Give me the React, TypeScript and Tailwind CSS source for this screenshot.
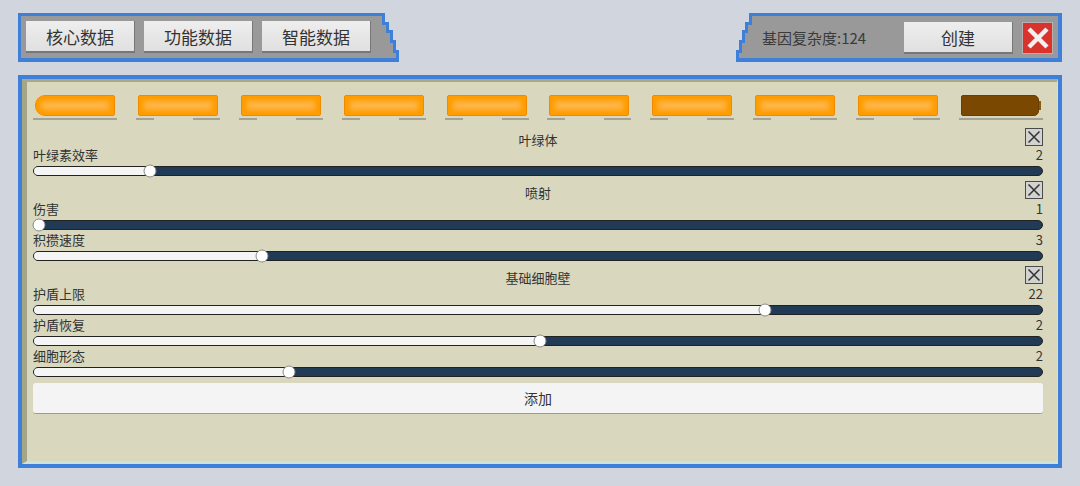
import React from "react";

const FONT = { fontFamily: '"Noto Sans CJK SC", "Noto Sans", sans-serif' };

type Item = { label: string; value: string; pct: number };
type Section = { title: string; items: Item[] };

const sections: Section[] = [
  { title: "叶绿体", items: [{ label: "叶绿素效率", value: "2", pct: 11.3 }] },
  {
    title: "喷射",
    items: [
      { label: "伤害", value: "1", pct: 0.3 },
      { label: "积攒速度", value: "3", pct: 22.4 },
    ],
  },
  {
    title: "基础细胞壁",
    items: [
      { label: "护盾上限", value: "22", pct: 72.3 },
      { label: "护盾恢复", value: "2", pct: 50 },
      { label: "细胞形态", value: "2", pct: 25.1 },
    ],
  },
];

function StairRight() {
  return (
    <svg width="18" height="49" viewBox="0 0 18 49" className="block shrink-0">
      <path d="M0 0 H4 V9 H8 V17 H12 V27 H15 V37 H18 V49 H0 Z" fill="#3e7fd9" />
      <path d="M0 3 H1 V12 H5 V20 H9 V30 H12 V40 H15 V45 H0 Z" fill="#999999" />
    </svg>
  );
}

function StairLeft() {
  return (
    <svg width="17" height="49" viewBox="0 0 17 49" className="block shrink-0">
      <path d="M17 0 H13 V9 H9 V17 H6 V27 H3 V37 H0 V49 H17 Z" fill="#3e7fd9" />
      <path d="M17 3 H16 V12 H12 V20 H9 V30 H6 V40 H3 V45 H17 Z" fill="#999999" />
    </svg>
  );
}

function TabButton({ children }: { children: React.ReactNode }) {
  return (
    <div className="w-[109px] h-[32px] flex items-center justify-center bg-gradient-to-b from-[#eeeeee] to-[#e0e0e0] border-b-2 border-r border-[#777777] text-[17px] text-[#333333] leading-none">
      {children}
    </div>
  );
}

function CheckBox() {
  return (
    <svg width="18" height="18" viewBox="0 0 18 18" className="block">
      <rect x="0.5" y="0.5" width="17" height="17" fill="#d2d2d0" stroke="#4a4a4a" strokeWidth="1" />
      <path d="M3.5 3.5 L14.5 14.5 M14.5 3.5 L3.5 14.5" stroke="#333333" strokeWidth="1.5" />
    </svg>
  );
}

function Slider({ pct }: { pct: number }) {
  return (
    <div className="relative h-[10px] rounded-full border border-[#222222] bg-[#213a56]">
      <div
        className="absolute left-0 top-0 bottom-0 rounded-full bg-[#f5f5f5]"
        style={{ width: `${pct}%` }}
      />
      <div
        className="absolute top-1/2 w-[13px] h-[13px] -translate-x-1/2 -translate-y-1/2 rounded-full bg-white border border-[#8a8a8a]"
        style={{ left: `calc(${pct}% + 2px)` }}
      />
    </div>
  );
}

function OrangeBar({ index }: { index: number }) {
  const first = index === 0;
  const last = index === 9;
  return (
    <div className="w-[80px] flex flex-col">
      {last ? (
        <div className="h-[21px] flex items-center">
          <div className="h-[21px] flex-1 bg-[#7a4800] rounded-l-[2px] rounded-r-[5px] border border-[#6a3e00]" />
          <div className="w-[2px] h-[9px] bg-[#8a5a10]" />
        </div>
      ) : (
        <div
          className={
            "h-[21px] bg-[#ffb648] border border-[#f08a00] shadow-[inset_0_0_0_2px_#ff9c00,inset_0_0_5px_5px_#ff9c00] " +
            (first ? "rounded-l-[10px] rounded-r-[2px]" : "rounded-[2px]")
          }
        />
      )}
      <div className="mt-[2px] -mx-[2px] h-[2px] flex justify-between">
        {first || last ? (
          <div className="flex-1 bg-[#a4a294]" />
        ) : (
          <>
            <div className="w-[18px] bg-[#a4a294]" />
            <div className="w-[27px] bg-[#a4a294]" />
          </>
        )}
      </div>
    </div>
  );
}

export default function App() {
  return (
    <div className="w-[1080px] h-[486px] bg-[#d1d5de] overflow-hidden" style={FONT}>
      {/* top bar */}
      <div className="flex justify-between pl-[18px] pr-[18px] pt-[13px]">
        {/* left tabs */}
        <div className="flex">
          <div className="h-[49px] bg-[#999999] border-t-[3px] border-b-[4px] border-l-[3px] border-[#3e7fd9] flex items-start pt-[5px] pl-[5px] pr-[10px] gap-[9px]">
            <TabButton>核心数据</TabButton>
            <TabButton>功能数据</TabButton>
            <TabButton>智能数据</TabButton>
          </div>
          <StairRight />
        </div>
        {/* right info */}
        <div className="flex">
          <StairLeft />
          <div className="h-[49px] bg-[#999999] border-t-[3px] border-b-[4px] border-r-[4px] border-[#3e7fd9] flex items-start pt-[6px] pr-[5px]">
            <div className="w-[151px] pl-[9px] h-[32px] flex items-center text-[15px] text-[#3a3a3a]">
              基因复杂度:124
            </div>
            <TabButton>创建</TabButton>
            <div className="ml-[9px] w-[31px] h-[32px] bg-[#d8332d] border border-[#b8b0b0] flex items-center justify-center">
              <svg width="24" height="24" viewBox="0 0 24 24">
                <path d="M3 3 L21 21 M21 3 L3 21" stroke="#f4f0f0" strokeWidth="4.5" />
              </svg>
            </div>
          </div>
        </div>
      </div>

      {/* main panel */}
      <div className="mx-[18px] mt-[13px] h-[393px] border-[4px] border-[#3e7fd9]">
        <div className="h-full bg-[#d9d8be] border-l-[5px] border-t-[3px] border-b-[3px] border-r-[1px] border-l-[#a5a587] border-t-[#a9a98a] border-b-[#cfe2d8] border-r-[#cfe2d8] pl-[6px] pr-[14px] flex flex-col">
          {/* orange bars */}
          <div className="mt-[13px] flex justify-between px-[2px]">
            {Array.from({ length: 10 }).map((_, i) => (
              <OrangeBar key={i} index={i} />
            ))}
          </div>

          {sections.map((s, si) => (
            <div key={s.title} className={si === 0 ? "mt-[8px]" : "mt-[5px]"}>
              <div className="grid grid-cols-[1fr_auto_1fr] h-[18px]">
                <div />
                <div className="pt-[4px] text-[13px] leading-[16px] text-[#333333]">{s.title}</div>
                <div className="flex justify-end">
                  <CheckBox />
                </div>
              </div>
              {s.items.map((it) => (
                <div key={it.label} className={si === 0 ? "mt-[1px]" : "mt-[2px]"}>
                  <div className="flex justify-between h-[16px] text-[13px] leading-[16px] text-[#333333]">
                    <span>{it.label}</span>
                    <span>{it.value}</span>
                  </div>
                  <div className="mt-[3px]">
                    <Slider pct={it.pct} />
                  </div>
                </div>
              ))}
            </div>
          ))}

          <div className="mt-[6px] h-[31px] rounded-[3px] bg-[#f4f4f4] border-b border-[#9a9a9a] flex items-center justify-center text-[14px] text-[#333333]">
            添加
          </div>
        </div>
      </div>
    </div>
  );
}
